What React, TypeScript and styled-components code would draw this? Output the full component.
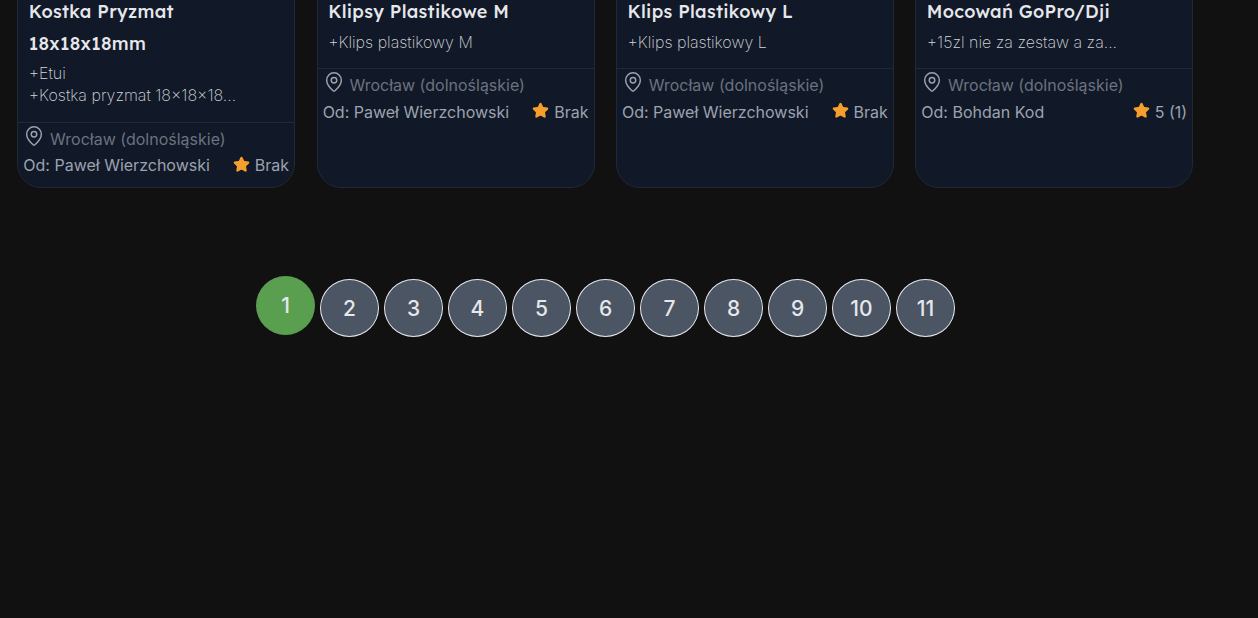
import React from 'react';
import styled, { createGlobalStyle } from 'styled-components';
import { MapPin, Star } from 'lucide-react';

const GlobalStyle = createGlobalStyle`
  html, body {
    margin: 0;
    height: 618px;
    overflow: hidden;
    background: #111111;
    font-family: Inter, "Liberation Sans", sans-serif;
  }
`;

// Styled components
const Page = styled.div`
  height: 618px;
  overflow: hidden;
  background: #111111;
`;

const CardGrid = styled.div`
  display: grid;
  grid-template-columns: repeat(4, 278px);
  column-gap: 21.33px;
  margin: -24px 0 0 17.3px;
`;

const Card = styled.article`
  height: 212px;
  box-sizing: border-box;
  display: flex;
  flex-direction: column;
  background: #111827;
  border: 1px solid #1f2937;
  border-radius: 0 0 24px 24px;
`;

const Body = styled.div`
  padding: 19px 10.5px 15px;
`;

const Title = styled.h3`
  margin: 0 0 4px;
  font-family: Lexend, Inter, sans-serif;
  font-size: 18px;
  font-weight: 500;
  letter-spacing: 0.3px;
  line-height: 31.7px;
  color: #e5e7eb;
`;

const Description = styled.p`
  margin: 0;
  font-size: 16px;
  font-weight: 200;
  line-height: 21.6px;
  color: #d1d5db;
  white-space: pre-line;
`;

const Footer = styled.div`
  border-top: 1px solid #1f2937;
  padding: 2.5px 5.2px 0 5px;
`;

const Location = styled.div`
  display: flex;
  align-items: center;
  height: 27px;
  font-size: 16px;
  font-weight: 400;
  color: #6b7280;

  svg {
    margin: 0 4.8px 6px 0;
    color: #9ca3af;
    flex: none;
  }
`;

const SellerRow = styled.div`
  display: flex;
  justify-content: space-between;
  align-items: center;
  height: 26px;
  font-size: 16px;
  color: #9ca3af;
`;

const Rating = styled.span`
  display: flex;
  align-items: center;
  gap: 5px;

  svg {
    margin-bottom: 2px;
  }
`;

const Pagination = styled.nav`
  display: flex;
  gap: 5px;
  margin: 88px 0 0 256px;
`;

const PageButton = styled.button<{ $active?: boolean }>`
  box-sizing: border-box;
  width: 59px;
  height: ${({ $active }) => ($active ? '59px' : '58px')};
  margin-top: ${({ $active }) => ($active ? '0' : '3px')};
  padding: 0;
  border-radius: 50%;
  border: ${({ $active }) => ($active ? 'none' : '1px solid #e5e7eb')};
  background: ${({ $active }) => ($active ? '#5a9f4f' : '#4b5563')};
  color: #e5e7eb;
  font-family: Inter, sans-serif;
  font-size: 21px;
  font-weight: 500;
`;

const listings = [
  {
    title: 'Kostka Pryzmat 18x18x18mm',
    description: '+Etui\n+Kostka pryzmat 18×18×18...',
    seller: 'Paweł Wierzchowski',
    rating: 'Brak',
  },
  {
    title: 'Klipsy Plastikowe M',
    description: '+Klips plastikowy M',
    seller: 'Paweł Wierzchowski',
    rating: 'Brak',
  },
  {
    title: 'Klips Plastikowy L',
    description: '+Klips plastikowy L',
    seller: 'Paweł Wierzchowski',
    rating: 'Brak',
  },
  {
    title: 'Mocowań GoPro/Dji',
    description: '+15zl nie za zestaw a za...',
    seller: 'Bohdan Kod',
    rating: '5 (1)',
  },
];

const pages = [1, 2, 3, 4, 5, 6, 7, 8, 9, 10, 11];

const App = () => (
  <Page>
    <GlobalStyle />
    <CardGrid>
      {listings.map((item) => (
        <Card key={item.title}>
          <Body>
            <Title>{item.title}</Title>
            <Description>{item.description}</Description>
          </Body>
          <Footer>
            <Location>
              <MapPin size={22} strokeWidth={1.6} />
              Wrocław (dolnośląskie)
            </Location>
            <SellerRow>
              <span>Od: {item.seller}</span>
              <Rating>
                <Star size={17} fill="#f5a02c" color="#f5a02c" />
                {item.rating}
              </Rating>
            </SellerRow>
          </Footer>
        </Card>
      ))}
    </CardGrid>
    <Pagination>
      {pages.map((n) => (
        <PageButton key={n} $active={n === 1}>
          {n}
        </PageButton>
      ))}
    </Pagination>
  </Page>
);

export default App;
